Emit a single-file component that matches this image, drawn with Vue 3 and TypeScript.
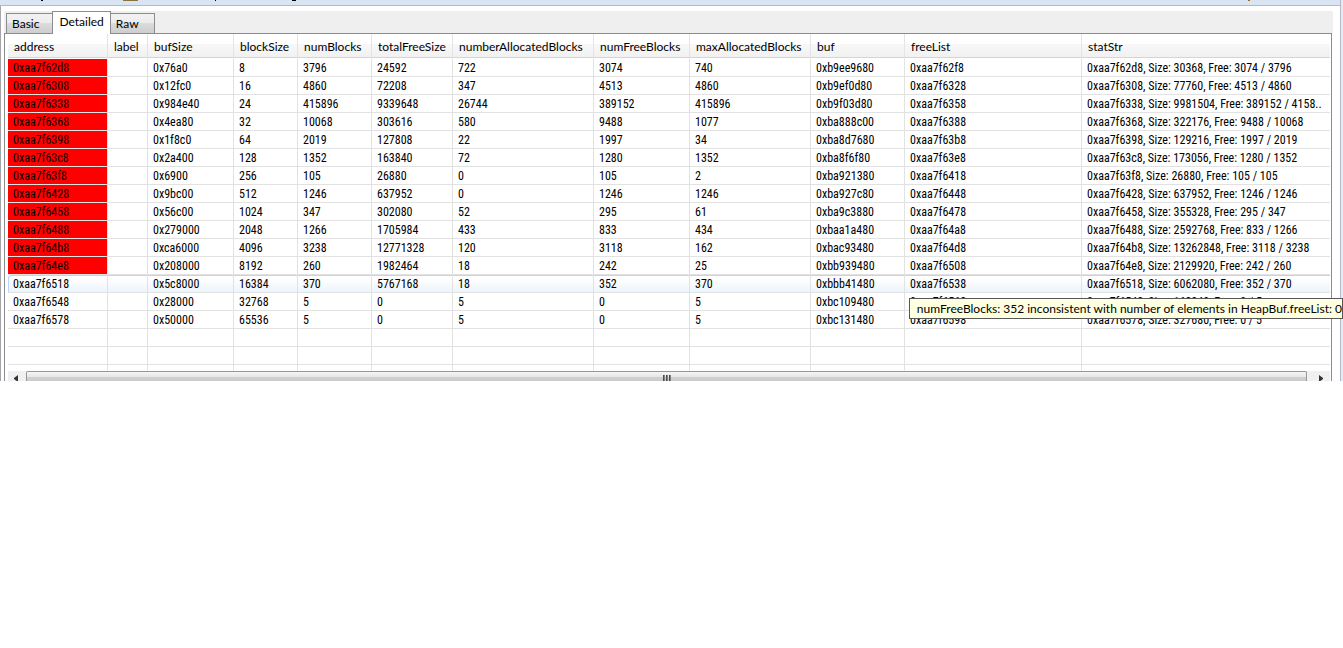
<script setup lang="ts">
import { ref } from 'vue'

interface Column {
  name: string
  width: string
}

interface Row {
  cells: string[]
  error: boolean
}

const tabs: string[] = ['Basic', 'Detailed', 'Raw']
const activeTab = ref('Detailed')

const columns: Column[] = [
  { name: 'address', width: '100px' },
  { name: 'label', width: '40px' },
  { name: 'bufSize', width: '86px' },
  { name: 'blockSize', width: '64px' },
  { name: 'numBlocks', width: '74px' },
  { name: 'totalFreeSize', width: '81px' },
  { name: 'numberAllocatedBlocks', width: '141px' },
  { name: 'numFreeBlocks', width: '96px' },
  { name: 'maxAllocatedBlocks', width: '121px' },
  { name: 'buf', width: '94px' },
  { name: 'freeList', width: '177px' },
  { name: 'statStr', width: 'auto' },
]

const source: string[] = [
  '0xaa7f62d8||0x76a0|8|3796|24592|722|3074|740|0xb9ee9680|0xaa7f62f8|0xaa7f62d8, Size: 30368, Free: 3074 / 3796',
  '0xaa7f6308||0x12fc0|16|4860|72208|347|4513|4860|0xb9ef0d80|0xaa7f6328|0xaa7f6308, Size: 77760, Free: 4513 / 4860',
  '0xaa7f6338||0x984e40|24|415896|9339648|26744|389152|415896|0xb9f03d80|0xaa7f6358|0xaa7f6338, Size: 9981504, Free: 389152 / 4158..',
  '0xaa7f6368||0x4ea80|32|10068|303616|580|9488|1077|0xba888c00|0xaa7f6388|0xaa7f6368, Size: 322176, Free: 9488 / 10068',
  '0xaa7f6398||0x1f8c0|64|2019|127808|22|1997|34|0xba8d7680|0xaa7f63b8|0xaa7f6398, Size: 129216, Free: 1997 / 2019',
  '0xaa7f63c8||0x2a400|128|1352|163840|72|1280|1352|0xba8f6f80|0xaa7f63e8|0xaa7f63c8, Size: 173056, Free: 1280 / 1352',
  '0xaa7f63f8||0x6900|256|105|26880|0|105|2|0xba921380|0xaa7f6418|0xaa7f63f8, Size: 26880, Free: 105 / 105',
  '0xaa7f6428||0x9bc00|512|1246|637952|0|1246|1246|0xba927c80|0xaa7f6448|0xaa7f6428, Size: 637952, Free: 1246 / 1246',
  '0xaa7f6458||0x56c00|1024|347|302080|52|295|61|0xba9c3880|0xaa7f6478|0xaa7f6458, Size: 355328, Free: 295 / 347',
  '0xaa7f6488||0x279000|2048|1266|1705984|433|833|434|0xbaa1a480|0xaa7f64a8|0xaa7f6488, Size: 2592768, Free: 833 / 1266',
  '0xaa7f64b8||0xca6000|4096|3238|12771328|120|3118|162|0xbac93480|0xaa7f64d8|0xaa7f64b8, Size: 13262848, Free: 3118 / 3238',
  '0xaa7f64e8||0x208000|8192|260|1982464|18|242|25|0xbb939480|0xaa7f6508|0xaa7f64e8, Size: 2129920, Free: 242 / 260',
  '0xaa7f6518||0x5c8000|16384|370|5767168|18|352|370|0xbbb41480|0xaa7f6538|0xaa7f6518, Size: 6062080, Free: 352 / 370',
  '0xaa7f6548||0x28000|32768|5|0|5|0|5|0xbc109480|0xaa7f6568|0xaa7f6548, Size: 163840, Free: 0 / 5',
  '0xaa7f6578||0x50000|65536|5|0|5|0|5|0xbc131480|0xaa7f6598|0xaa7f6578, Size: 327680, Free: 0 / 5',
]

const rows: Row[] = source.map((line, i) => ({ cells: line.split('|'), error: i < 12 }))
const hovered = 12
</script>

<template>
  <main class="view">
    <div class="toolbar">
      <svg class="toolbar-edge" width="1260" height="1" aria-hidden="true">
        <rect x="41" width="2" height="1" fill="#000" />
        <rect x="123" width="15" height="1" fill="#8b7340" />
        <rect x="215" width="1" height="1" fill="#000" />
        <rect x="292" width="4" height="1" fill="#000" />
        <rect x="1248" width="2" height="1" fill="#a8690c" />
      </svg>
    </div>

    <section class="content">
      <div class="tabs" role="tablist">
        <button
          v-for="tab in tabs"
          :key="tab"
          type="button"
          role="tab"
          class="tab"
          :class="{ active: tab === activeTab }"
          :aria-selected="tab === activeTab"
          @click="activeTab = tab"
        >{{ tab }}</button>
      </div>

      <div class="panel">
        <table>
          <colgroup>
            <col v-for="c in columns" :key="c.name" :style="{ width: c.width }" />
          </colgroup>
          <thead>
            <tr>
              <th v-for="c in columns" :key="c.name" scope="col">{{ c.name }}</th>
            </tr>
          </thead>
          <tbody>
            <tr v-for="(row, r) in rows" :key="r" :class="{ error: row.error, hovered: r === hovered }">
              <td v-for="(cell, i) in row.cells" :key="i">{{ cell }}</td>
            </tr>
            <tr v-for="n in 2" :key="'empty' + n">
              <td v-for="c in columns" :key="c.name"></td>
            </tr>
            <tr class="cut">
              <td v-for="c in columns" :key="c.name"></td>
            </tr>
          </tbody>
        </table>

        <div class="scrollbar">
          <button type="button" class="arrow" aria-label="Scroll left">
            <svg width="4" height="7" viewBox="0 0 4 7"><path d="M4 0V7L0 4V3Z" fill="#333" /></svg>
          </button>
          <div class="thumb"><i></i><i></i><i></i></div>
          <button type="button" class="arrow last" aria-label="Scroll right">
            <svg width="4" height="7" viewBox="0 0 4 7"><path d="M0 0V7L4 4V3Z" fill="#333" /></svg>
          </button>
        </div>
      </div>
    </section>

    <div class="tooltip" role="tooltip">numFreeBlocks: 352 inconsistent with number of elements in HeapBuf.freeList: 0</div>
  </main>
</template>

<style>
body {
  background: #fff;
}
</style>

<style scoped>
.view {
  position: relative;
  box-sizing: border-box;
  padding-right: 2px;
  background: #e7eaf0;
  color: #000;
  font: 12px/16px Lato, "Liberation Sans", sans-serif;
}

.toolbar {
  height: 5px;
  overflow: hidden;
  background: #dae5f3;
  border-right: 1px solid #b1bac8;
  border-bottom: 1px solid #b1bac8;
}

.toolbar-edge {
  display: block;
}

.content {
  padding: 5px 7px 0 3px;
  background: #fff;
  border-left: 1px solid #a5a5a8;
  border-right: 1px solid #b1bac8;
}

.tabs {
  display: flex;
  align-items: flex-end;
  height: 22px;
  padding-left: 2px;
  background: #efefef;
}

.tab {
  height: 20px;
  padding: 0 13px 0 5px;
  border: 1px solid #8b8c92;
  border-bottom: 0;
  background: linear-gradient(#f3f3f3, #ebebeb 50%, #dcdcdc 50%, #cecece);
  color: #000;
  font: inherit;
  line-height: 20px;
}

.tab:first-child {
  border-right: 0;
}

.tab:last-child {
  padding-right: 15px;
  border-left: 0;
}

.tab.active {
  z-index: 1;
  height: 23px;
  margin-bottom: -1px;
  padding: 0 6px 2px;
  background: #fff;
  line-height: 20px;
}

.panel {
  margin-right: 1px;
  padding: 0 1px 0 3px;
  border: 1px solid #8b8c92;
  border-bottom: 0;
  background: #fff;
}

table {
  width: 100%;
  table-layout: fixed;
  border-collapse: separate;
  border-spacing: 0;
}

th,
td {
  box-sizing: border-box;
  overflow: hidden;
  text-align: left;
  white-space: nowrap;
}

th {
  height: 24px;
  padding: 3px 0 0 6px;
  border-right: 1px solid #e3e4e6;
  border-bottom: 1px solid #d5d5d5;
  background: linear-gradient(#fff 42%, #f8f8f8 42%, #f1f1f2);
  font-weight: 400;
}

td {
  height: 18px;
  padding: 2px 0 0 5px;
  border-right: 1px solid #e2e2e2;
  border-bottom: 1px solid #e2e2e2;
  font: 12px/15px "Roboto Condensed", Roboto, "Liberation Sans", sans-serif;
}

th:last-child,
td:last-child {
  border-right: 0;
}

tbody tr:first-child td {
  height: 19px;
  border-top: 1px solid #fff;
}

.error td:first-child {
  background: #f00;
  background-clip: padding-box;
}

.hovered {
  background: linear-gradient(#fff 20%, #eaf3fc);
}

.hovered td {
  box-shadow: inset 0 1px #b8d6fb;
}

.hovered td:first-child {
  border-left: 1px solid #b8d6fb;
  border-top-left-radius: 3px;
  padding-left: 4px;
}

.cut td {
  height: 6px;
  padding: 0;
  border-bottom-color: #fff;
}

.scrollbar {
  display: flex;
  height: 10px;
  overflow: hidden;
  background: #f0f0f0;
}

.arrow {
  width: 18px;
  padding: 4px 0 0 6px;
  border: 0;
  background: #f0f0f0;
  text-align: left;
}

.arrow svg {
  display: block;
}

.arrow.last {
  width: 23px;
  padding-left: 12px;
}

.thumb {
  display: flex;
  flex: 1;
  justify-content: center;
  gap: 1px;
  padding-top: 3px;
  border: 1px solid #979797;
  border-bottom: 0;
  border-radius: 2px 2px 0 0;
  background: linear-gradient(#f5f5f5, #e6e6e6 55%, #d0d0d0 60%, #cbcbcb);
}

.thumb i {
  width: 2px;
  background: linear-gradient(90deg, #333, #999);
}

.tooltip {
  position: absolute;
  top: 298px;
  right: 0;
  padding: 2px 0 1px 7px;
  border: 1px solid #575757;
  background: #ffffe1;
  white-space: nowrap;
}
</style>
